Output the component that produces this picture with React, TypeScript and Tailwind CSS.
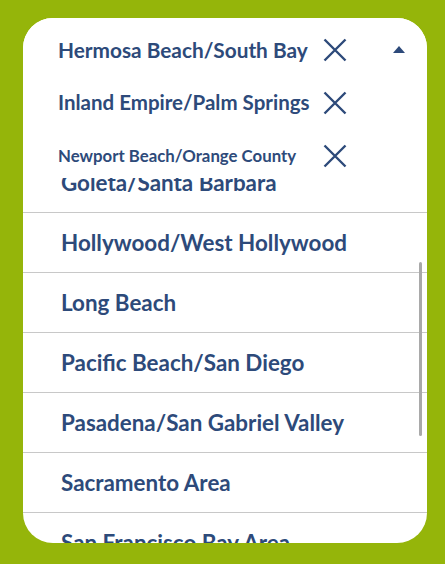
import React from "react";

const XIcon = () => (
  <svg width="24" height="24" viewBox="0 0 24 24" className="shrink-0">
    <path d="M1.5 1.5 L22.5 22.5 M22.5 1.5 L1.5 22.5" stroke="#2d4a7a" strokeWidth="2.4" fill="none" />
  </svg>
);

const tags = [
  { label: "Hermosa Beach/South Bay", size: "text-[20.8px]" },
  { label: "Inland Empire/Palm Springs", size: "text-[20.5px]" },
  { label: "Newport Beach/Orange County", size: "text-[16.8px]" },
];

const rows = [
  "Goleta/Santa Barbara",
  "Hollywood/West Hollywood",
  "Long Beach",
  "Pacific Beach/San Diego",
  "Pasadena/San Gabriel Valley",
  "Sacramento Area",
  "San Francisco Bay Area",
];

export default function App() {
  return (
    <div
      className="w-[445px] h-[564px] bg-[#95b50a] pt-[18px] px-[23px] overflow-hidden"
      style={{ fontFamily: "Lato, 'Noto Sans', sans-serif" }}
    >
      <div className="relative w-[404px] h-[525px] bg-white rounded-[30px] overflow-hidden flex flex-col text-[#2d4a7a]">
        <div className="h-[160px] shrink-0 pt-[5px] pl-[35px] flex flex-col overflow-hidden relative z-10 bg-white">
          {tags.map((t, i) => (
            <div key={t.label} className="h-[53px] flex items-center shrink-0">
              <div className={`w-[265px] font-bold whitespace-nowrap ${t.size}`}>{t.label}</div>
              <XIcon />
              {i === 0 && (
                <svg width="12" height="7" viewBox="0 0 12 7" className="ml-[46px]">
                  <path d="M0 7 L6 0 L12 7 Z" fill="#2d4a7a" />
                </svg>
              )}
            </div>
          ))}
        </div>
        <div className="flex-1 overflow-hidden">
          <div className="-mt-[25px]">
            {rows.map((r) => (
              <div
                key={r}
                className="h-[60px] border-b border-[#c8c8c8] pl-[38px] flex items-center text-[22.4px] font-bold whitespace-nowrap"
              >
                {r}
              </div>
            ))}
          </div>
        </div>
        <div className="absolute left-[396px] top-[244px] w-[3px] h-[174px] rounded-full bg-[#a9a9a9]" />
      </div>
    </div>
  );
}
